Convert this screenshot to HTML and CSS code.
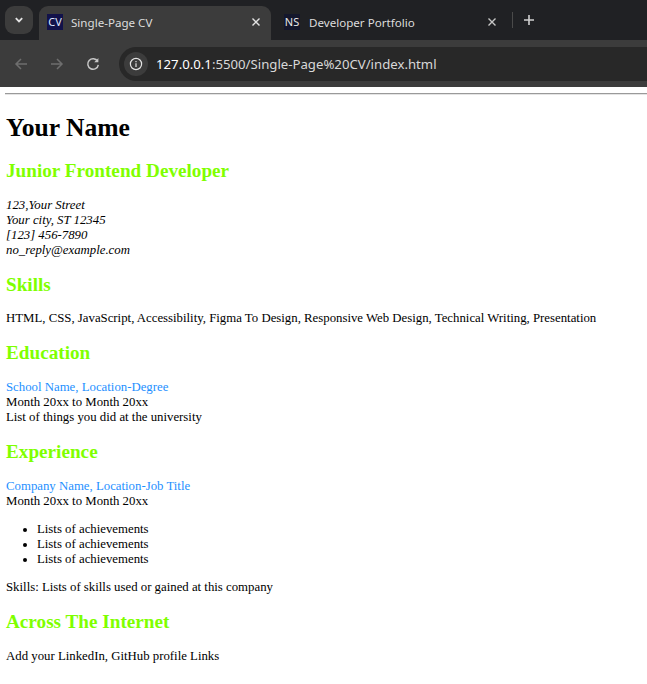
FILE: index.html
```html
<!DOCTYPE html>
<html lang="en">
<head>
<meta charset="utf-8">
<title>Single-Page CV</title>
<link rel="stylesheet" href="styles.css">
</head>
<body>
<header class="browser">
  <div class="tabstrip">
    <div class="tabmenu">
      <svg width="12" height="12" viewBox="0 0 12 12"><path d="M2.8 4.2 6 7.4 9.2 4.2" fill="none" stroke="#e3e3e3" stroke-width="1.8"/></svg>
    </div>
    <div class="tab active">
      <span class="favicon fav-cv">CV</span>
      <span class="tabtitle">Single-Page CV</span>
      <svg class="close" width="10" height="10" viewBox="0 0 10 10"><path d="M1.5 1.5 8.5 8.5M8.5 1.5 1.5 8.5" stroke="#e3e3e3" stroke-width="1.4"/></svg>
    </div>
    <div class="tab second">
      <span class="favicon fav-ns">NS</span>
      <span class="tabtitle">Developer Portfolio</span>
      <svg class="close" width="10" height="10" viewBox="0 0 10 10"><path d="M1.5 1.5 8.5 8.5M8.5 1.5 1.5 8.5" stroke="#c7c7c7" stroke-width="1.4"/></svg>
    </div>
    <span class="divider"></span>
    <svg class="newtab" width="12" height="12" viewBox="0 0 12 12"><path d="M6 1V11M1 6H11" stroke="#d0d0d0" stroke-width="1.6"/></svg>
  </div>
  <div class="toolbar">
    <svg class="navicon" width="16" height="16" viewBox="0 0 16 16"><path d="M14 8H3M8 3 3 8 8 13" fill="none" stroke="#6e6e6e" stroke-width="1.5"/></svg>
    <svg class="navicon" width="16" height="16" viewBox="0 0 16 16"><path d="M2 8H13M8 3 13 8 8 13" fill="none" stroke="#6e6e6e" stroke-width="1.5"/></svg>
    <svg class="navicon" width="16" height="16" viewBox="0 0 16 16"><path d="M12.6 5.2A5.3 5.3 0 1 0 13.3 8.8" fill="none" stroke="#c7c7c7" stroke-width="1.5"/><path d="M13.4 2V6.2H9.2Z" fill="#c7c7c7"/></svg>
    <div class="omnibox">
      <span class="siteinfo">
        <svg width="14" height="14" viewBox="0 0 14 14"><circle cx="7" cy="7" r="5.6" fill="none" stroke="#e3e3e3" stroke-width="1.2"/><path d="M7 6.2V10M7 4V5.2" stroke="#e3e3e3" stroke-width="1.2"/></svg>
      </span>
      <span class="url"><span class="host">127.0.0.1</span>:5500/Single-Page%20CV/index.html</span>
    </div>
  </div>
</header>
<main class="page">
  <hr class="rule">
  <h1>Your Name</h1>
  <h2 class="title">Junior Frontend Developer</h2>
  <p><em>123,Your Street<br>Your city, ST 12345<br>[123] 456-7890<br>no_reply@example.com</em></p>
  <h2 class="tight">Skills</h2>
  <p>HTML, CSS, JavaScript, Accessibility, Figma To Design, Responsive Web Design, Technical Writing, Presentation</p>
  <h2>Education</h2>
  <p><span class="role">School Name, Location-Degree</span><br>Month 20xx to Month 20xx<br>List of things you did at the university</p>
  <h2>Experience</h2>
  <p><span class="role">Company Name, Location-Job Title</span><br>Month 20xx to Month 20xx</p>
  <ul>
    <li>Lists of achievements</li>
    <li>Lists of achievements</li>
    <li>Lists of achievements</li>
  </ul>
  <p>Skills: Lists of skills used or gained at this company</p>
  <h2>Across The Internet</h2>
  <p>Add your LinkedIn, GitHub profile Links</p>
</main>
</body>
</html>
```
FILE: styles.css
```css
html, body { margin: 0; padding: 0; background: #fff; }
body { width: 647px; height: 684px; overflow: hidden; }

.browser { font-family: "Noto Sans", "Open Sans", sans-serif; color: #e3e3e3; }
.tabstrip { height: 40px; background: #202124; display: flex; align-items: flex-start; padding-top: 6px; padding-left: 5px; box-sizing: border-box; }
.tabmenu { width: 28px; height: 28px; border-radius: 9px; background: #3c3c3c; display: flex; align-items: center; justify-content: center; }
.tab { width: 235px; height: 34px; display: flex; align-items: center; padding: 0 0 2px 8px; box-sizing: border-box; font-size: 11.6px; border-radius: 9px 9px 0 0; }
.tab.active { width: 232px; margin-left: 6px; background: #3c3c3c; }
.favicon { width: 16px; height: 16px; margin-right: 8px; font-size: 11px; line-height: 16px; text-align: center; flex: none; }
.fav-cv { background: #12124a; color: #dfe6ff; }
.fav-ns { background: #14172c; color: #e8e8e8; margin-left: 5px; margin-right: 9px; }
.tabtitle { flex: 1; color: #dcdcdc; }
.close { margin-right: 10px; }
.second .close { margin-right: 9px; }
.divider { width: 1px; height: 16px; background: #4a4a4a; margin: 6px 10px 0 6px; }
.newtab { margin-top: 8px; }
.toolbar { height: 47px; background: #3c3c3c; display: flex; align-items: center; padding: 0 0 0 13px; box-sizing: border-box; gap: 20px; }
.omnibox { flex: 1; height: 34px; background: #282828; border-radius: 17px 0 0 17px; margin-left: -2px; display: flex; align-items: center; padding-left: 5px; font-size: 13.2px; color: #d8d8d8; }
.siteinfo { width: 24px; height: 24px; border-radius: 50%; background: #3c3c3c; display: flex; align-items: center; justify-content: center; margin-right: 8px; }
.host { color: #fff; }

.page { font-family: "Liberation Serif", "Times New Roman", serif; font-size: 12.8px; line-height: 15px; color: #000; padding: 0 0 0 6px; }
.rule { margin: 6px 0 0 -1px; border: 0; height: 1px; background: #9a9a9a; border-bottom: 1px solid #e4e4e4; }
h1 { font-size: 25.6px; line-height: 30px; margin: 18px 0 0; }
h2 { font-size: 19.2px; line-height: 22px; margin: 16px 0 0; padding-bottom: 3px; color: #7fff00; }
h2.title { margin-top: 17px; }
h2.tight { padding-bottom: 2px; }
p { margin: 13px 0 0; }
em { font-style: italic; }
.role { color: #1e90ff; }
ul { margin: 13px 0 0; padding: 0 0 0 31px; }
```
